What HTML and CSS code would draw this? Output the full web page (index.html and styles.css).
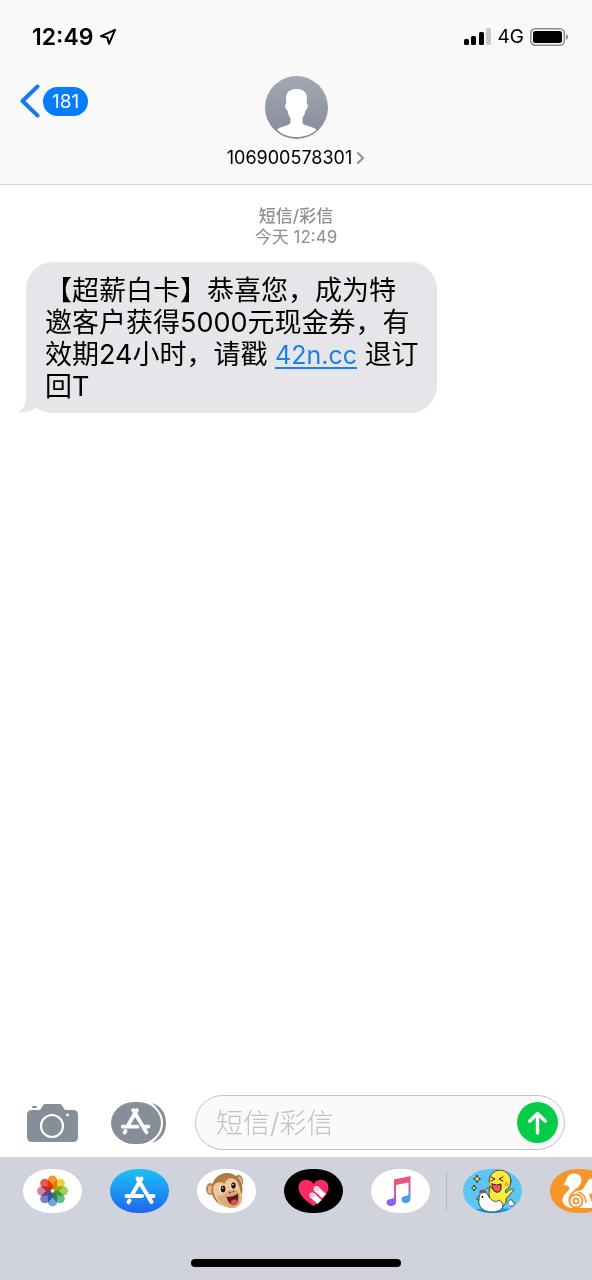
FILE: index.html
```html
<!DOCTYPE html>
<html lang="zh-CN">
<head>
<meta charset="utf-8">
<meta name="viewport" content="width=device-width, initial-scale=1">
<title>106900578301</title>
<link rel="stylesheet" href="styles.css">
</head>
<body>
<svg class="defs" width="0" height="0" aria-hidden="true">
  <defs>
    <linearGradient id="avatarFill" x1="0" y1="0" x2="0" y2="1"><stop offset="0" stop-color="#a2a8b4"/><stop offset="1" stop-color="#858a98"/></linearGradient>
    <linearGradient id="storeFill" x1="0" y1="0" x2="0" y2="1"><stop offset="0" stop-color="#1bc1f5"/><stop offset="1" stop-color="#1f67ef"/></linearGradient>
    <linearGradient id="musicFill" x1="0" y1="0" x2="0" y2="1"><stop offset="0" stop-color="#f5506e"/><stop offset=".35" stop-color="#e8568c"/><stop offset=".75" stop-color="#9a62e6"/><stop offset="1" stop-color="#7b62ee"/></linearGradient>
    <linearGradient id="musicFillRight" x1="0" y1="0" x2="0" y2="1"><stop offset="0" stop-color="#f5506e"/><stop offset=".4" stop-color="#c85fae"/><stop offset=".8" stop-color="#4a9df0"/><stop offset="1" stop-color="#35a5f2"/></linearGradient>
    <radialGradient id="furFill"><stop offset="0" stop-color="#cf9a5f"/><stop offset="1" stop-color="#a8743f"/></radialGradient>
    <g id="storeGlyph" fill="none" stroke="#fff" stroke-width="4" stroke-linecap="round">
      <path d="M31.500 9.500L22.500 25M27.500 9.500L41.500 33M16.500 27H32M39 27H43.500M19.500 31.500L18.500 33.300"/>
    </g>
  </defs>
</svg>

<header class="top">
  <div class="status">
    <div class="status-time">
      <span>12:49</span>
      <svg width="18" height="18" viewBox="0 0 18 18" aria-hidden="true"><path d="M16 1.800L2 8.200L8.300 9.400L10 15.800Z" fill="none" stroke="#000" stroke-width="2" stroke-linejoin="round"/></svg>
    </div>
    <div class="status-signal">
      <svg width="28" height="18" viewBox="0 0 28 18" aria-hidden="true"><rect x="0" y="11" width="5" height="6" rx="1.500"/><rect x="7" y="8" width="5" height="9" rx="1.500"/><rect x="15" y="4" width="5" height="13" rx="1.500"/><rect x="22" y="0" width="5" height="17" rx="1.500" fill="#c9c9c9"/></svg>
      <span>4G</span>
      <svg width="38" height="18" viewBox="0 0 38 18" aria-hidden="true"><rect x=".8" y=".8" width="33.500" height="16.400" rx="4.500" fill="none" stroke="#8c8c8c" stroke-width="1.500"/><rect x="3" y="3" width="29" height="12" rx="2.500"/><path d="M36 6Q38 6.500 38 9T36 12Z" fill="#8c8c8c"/></svg>
    </div>
  </div>
  <nav class="nav">
    <button class="back" type="button" aria-label="返回,181 条未读">
      <svg width="20" height="34" viewBox="0 0 20 34" aria-hidden="true"><path d="M17.500 2.500L2.500 17L17.500 31.500" fill="none" stroke="#147aef" stroke-width="4" stroke-linecap="round" stroke-linejoin="round"/></svg>
      <span class="badge">181</span>
    </button>
    <button class="contact" type="button">
      <svg width="63" height="63" viewBox="0 0 63 63" aria-hidden="true"><circle cx="31.500" cy="31.500" r="31.500" fill="url(#avatarFill)"/><path d="M31.500 13C37 13 42 15.500 42 22L41.700 28C43.500 28 43.200 33 40.500 34.500C40 38 38.500 40 37.500 42V46.500C38 50 46 49.500 51.500 53.500C46 59 39 61 31.500 61S17 59 12 53.500C17 49.500 25 50 25.500 46.500V42C24 40 23 38 22.500 34.500C19.800 33 19.500 28 21.300 28L21 22C21 15.500 26 13 31.500 13Z" fill="#fff"/></svg>
      <span class="number">106900578301
        <svg width="9" height="14" viewBox="0 0 9 14" aria-hidden="true"><path d="M2 2L7 7L2 12" fill="none" stroke="#8e8e93" stroke-width="2" stroke-linecap="round"/></svg>
      </span>
    </button>
  </nav>
</header>

<main class="thread">
  <p class="stamp"><strong>短信/彩信</strong><span>今天 12:49</span></p>
  <div class="bubble">
    <svg class="tail" width="30" height="32" viewBox="0 0 30 32" aria-hidden="true"><path d="M8 0V14C8 22 6 28 0 31Q10 33 19 26L30 22V0Z" fill="#e5e5ea"/></svg>
    <p class="message">【超薪白卡】恭喜您，成为特邀客户获得5000元现金券，有效期24小时，请戳 <a href="#">42n.cc</a> 退订回T</p>
  </div>
</main>

<form class="compose">
  <button class="tool" type="button" aria-label="相机">
    <svg width="52" height="40" viewBox="0 0 52 40" aria-hidden="true"><g fill="#868e99"><rect x="5" y="3" width="5" height="2" rx="1"/><path d="M5 7H12C15 7 15 1 18 1H33C36 1 36 7 39 7H46Q51 7 51 12V34Q51 39 46 39H5Q0 39 0 34V12Q0 7 5 7Z"/></g><circle cx="25" cy="23" r="11" fill="none" stroke="#fff" stroke-width="2.200"/><circle cx="40.500" cy="12" r="1.400" fill="#fff"/></svg>
  </button>
  <button class="tool" type="button" aria-label="App">
    <svg width="56" height="42" viewBox="0 0 56 42" aria-hidden="true"><path d="M41 1C50 4 55 11 55 21S50 38 41 41C47 36 50 30 50 21S47 6 41 1Z" fill="#868e99"/><rect x="-2" y="-1.500" width="54" height="45" rx="25" ry="22" fill="#fff"/><rect width="50" height="42" rx="23" ry="21" fill="#868e99"/><use href="#storeGlyph" transform="translate(-4 -1) scale(.95)"/></svg>
  </button>
  <div class="field">
    <input type="text" placeholder="短信/彩信" aria-label="短信/彩信">
    <button class="send" type="button" aria-label="发送">
      <svg width="41" height="41" viewBox="0 0 41 41" aria-hidden="true"><path d="M20.500 31V12M12.800 19L20.500 11.500L28.200 19" fill="none" stroke="#fff" stroke-width="3.400" stroke-linecap="round" stroke-linejoin="round"/></svg>
    </button>
  </div>
</form>

<footer class="dock">
  <div class="apps">
    <div class="group">
      <button class="app app-light" type="button" aria-label="照片">
        <svg viewBox="0 0 59 44" aria-hidden="true"><g class="petals" transform="translate(29.500 22)"><rect x="-4.700" y="-15.500" width="9.400" height="14" rx="4.700" fill="#f6972e"/><rect x="-4.700" y="-15.500" width="9.400" height="14" rx="4.700" fill="#e6d335" transform="rotate(45)"/><rect x="-4.700" y="-15.500" width="9.400" height="14" rx="4.700" fill="#a4cf55" transform="rotate(90)"/><rect x="-4.700" y="-15.500" width="9.400" height="14" rx="4.700" fill="#63bd87" transform="rotate(135)"/><rect x="-4.700" y="-15.500" width="9.400" height="14" rx="4.700" fill="#69a9d8" transform="rotate(180)"/><rect x="-4.700" y="-15.500" width="9.400" height="14" rx="4.700" fill="#7786c1" transform="rotate(225)"/><rect x="-4.700" y="-15.500" width="9.400" height="14" rx="4.700" fill="#cf86a8" transform="rotate(270)"/><rect x="-4.700" y="-15.500" width="9.400" height="14" rx="4.700" fill="#e95a4b" transform="rotate(315)"/></g></svg>
      </button>
      <button class="app" type="button" aria-label="App Store">
        <svg viewBox="0 0 59 44" aria-hidden="true"><rect width="59" height="44" fill="url(#storeFill)"/><use href="#storeGlyph"/></svg>
      </button>
      <button class="app app-light" type="button" aria-label="拟我表情">
        <svg viewBox="0 0 59 44" aria-hidden="true"><ellipse cx="13.500" cy="20" rx="4.500" ry="6" fill="#b98250"/><ellipse cx="13.500" cy="20.500" rx="2.700" ry="4" fill="#eeb596"/><ellipse cx="42.500" cy="11" rx="3.500" ry="5.500" fill="#b98250" transform="rotate(-20 42.500 11)"/><ellipse cx="43" cy="11.500" rx="1.800" ry="3.600" fill="#eeb596" transform="rotate(-20 43 11.500)"/><ellipse cx="30" cy="20.500" rx="15.500" ry="16.500" fill="url(#furFill)"/><path d="M17 25C13 14 22 11 28 15C29 8 38 7 41 14C43 18 43 22 45 27C47 34 42 39 35 39C26 39 20 34 17 25Z" fill="#efc797"/><path d="M20 27C23 26 26 28 28 24C32 20 39 19 42 23C45 28 45 38 36 39C28 39 22 34 20 27Z" fill="#dcaa75"/><ellipse cx="25.500" cy="20" rx="3.300" ry="4" fill="#fff"/><ellipse cx="36.500" cy="16.500" rx="3" ry="3.800" fill="#fff"/><ellipse cx="26" cy="20" rx="2.500" ry="3.400" fill="#22140f"/><ellipse cx="36.500" cy="16.500" rx="2.300" ry="3.200" fill="#22140f"/><circle cx="25.500" cy="19" r=".8" fill="#fff"/><circle cx="36" cy="15.500" r=".8" fill="#fff"/><path d="M32 23L34 24M36 22L37 23" stroke="#6e3d20" stroke-width="1.300"/><path d="M29.500 28Q36 28 41 24.500Q42.500 35 37 36Q31.500 36 29.500 28Z" fill="#651820"/><ellipse cx="37" cy="33" rx="3.300" ry="2.300" fill="#d9525c" transform="rotate(-20 37 33)"/></svg>
      </button>
      <button class="app app-dark" type="button" aria-label="Digital Touch">
        <svg viewBox="0 0 59 44" aria-hidden="true"><path d="M29.500 37C23 33 14.500 26 14.500 18.500C14.500 10 25 8 29.500 15C34 8 44.500 10 44.500 18.500C44.500 26 36 33 29.500 37Z" fill="#fb2b66"/><g fill="none" stroke="#fff" stroke-width="5.800"><path d="M32.500 20L40 27M28.300 26.300L35.500 33"/><path d="M32.500 20H32.510M28.300 26.300H28.310" stroke-linecap="round"/></g><g fill="none" stroke="#f88fae" stroke-width=".9"><circle cx="32.600" cy="20.100" r="1.600"/><circle cx="28.400" cy="26.400" r="1.600"/></g></svg>
      </button>
      <button class="app app-light" type="button" aria-label="音乐">
        <svg viewBox="0 0 59 44" aria-hidden="true"><path d="M23 10.500L31 8.800V14.800L25 16V33C25 35.800 22.500 37 20 37C17 37 15.500 35.500 15.500 33.500C15.500 30.500 18.500 30 21 29.700Q23 29.400 23 27.500Z" fill="url(#musicFill)"/><path d="M30.500 8.900L39.500 7V29.500C39.500 32.500 37 34 34.500 34C32 34 30.500 32.500 30.500 30.500C30.500 27.500 33.500 27 36 26.700Q37.500 26.400 37.500 25V13.500L30.500 14.900Z" fill="url(#musicFillRight)"/></svg>
      </button>
    </div>
    <span class="divider"></span>
    <div class="group">
      <button class="app app-sky" type="button" aria-label="表情贴纸">
        <svg viewBox="0 0 59 44" aria-hidden="true"><ellipse cx="30" cy="44" rx="28" ry="5" fill="#179be6"/><g stroke="#222" stroke-linecap="round" stroke-linejoin="round"><path d="M45 34C45 30 50 30 50 33C53 34 51 38 48 37" fill="#fff" stroke-width=".8"/><path d="M27 17C25 25 26 35 34 38C40 40 44 34 43 30L51 21C50 18 46 21 43 24L42 21Z" fill="#fde93b" stroke-width=".8"/><circle cx="37" cy="12" r="11" fill="#fde93b" stroke-width=".8"/><path d="M28 20L42 19V27H29Z" fill="#fde93b" stroke="none"/><path d="M16 27C18 22 24 22 26 28C29 32 33 34 36 31C44 36 39 43 29 43C19 43 14 37 16 27Z" fill="#fff" stroke-width=".8"/><path d="M17 24Q16 21 19 22Q20 19 23 23" fill="#ee3d48" stroke-width=".6"/><path d="M15.500 28L13 30L16 31Z" fill="#ffb52c" stroke-width=".6"/><path d="M28 8L32 10L28 12M40 8L36 10L40 12" fill="none" stroke-width="1"/><path d="M29 15Q34 17 38 15V20Q37 24 33 23Q29 22 29 15" fill="#f5515f" stroke-width="1"/><path d="M23 20Q25 17 27 21" fill="#fde93b" stroke-width=".8"/></g><circle cx="19.500" cy="28" r=".9"/><circle cx="26.800" cy="15" r="1.800" fill="#ffa044"/><circle cx="43.500" cy="15" r="2" fill="#ffa044"/><path d="M14 6L15.200 9L17.500 10L15.200 11L14 14L12.800 11L10.500 10L12.800 9ZM11 16L11.800 18L13.500 19L11.800 20L11 22L10.200 20L8.500 19L10.200 18Z" fill="#fff04b" stroke="#222" stroke-width=".8"/></svg>
      </button>
      <button class="app app-orange" type="button" aria-label="UC">
        <svg viewBox="0 0 59 44" aria-hidden="true"><path d="M21 39C11 37 10 29 17 23C22 19 19 16 13 16C17 13 16 5 23 4.500C33 4 34 14 27 19C21 23 17 28 19 34Z" fill="#fff"/><path d="M20 39C17 29 23 21 32 21C35 18 37 11 41 9L43 14C49 15 51 21 45 24L39 25L44 39Z" fill="#fff"/><circle cx="26" cy="32" r="6.500" fill="#fff" stroke="#f7942a" stroke-width="1.800"/><circle cx="26" cy="32" r="2.600" fill="none" stroke="#f7942a" stroke-width="1.800"/><path d="M28 23Q36 25 36 34" fill="none" stroke="#f7942a" stroke-width="1.500"/></svg>
      </button>
    </div>
  </div>
  <div class="home"></div>
</footer>
</body>
</html>
```
FILE: styles.css
```css
* {
  box-sizing: border-box;
}

body {
  margin: 0;
  min-height: 100vh;
  display: flex;
  flex-direction: column;
  background: #fff;
  color: #000;
  font-family: Inter, "Noto Sans CJK SC", sans-serif;
  overflow-x: hidden;
}

button {
  border: 0;
  padding: 0;
  background: none;
  font: inherit;
  color: inherit;
}

svg {
  display: block;
}

p {
  margin: 0;
}

.defs {
  position: absolute;
}

.top {
  background: #f9f9f9;
  border-bottom: 1px solid #d2d2d4;
  padding-bottom: 15px;
}

.status {
  display: flex;
  justify-content: space-between;
  align-items: center;
  padding: 22px 24px 0 32px;
}

.status-time,
.status-signal {
  display: flex;
  align-items: center;
  gap: 6px;
}

.status-time {
  font-size: 23px;
  line-height: 30px;
  font-weight: 600;
}

.status-signal {
  font-size: 19px;
  line-height: 30px;
}

.nav {
  display: grid;
  grid-template-columns: 1fr auto 1fr;
  align-items: start;
  padding: 24px 20px 0;
}

.back {
  display: flex;
  align-items: center;
  gap: 3px;
  justify-self: start;
  margin-top: 8px;
}

.badge {
  padding: 0 9px;
  border-radius: 15px;
  background: #087cff;
  color: #fff;
  font-size: 19px;
  line-height: 29px;
}

.contact {
  display: flex;
  flex-direction: column;
  align-items: center;
  gap: 8px;
}

.number {
  display: flex;
  align-items: center;
  gap: 4px;
  font-size: 18px;
  line-height: 22px;
}

.thread {
  flex: 1;
  padding: 21px 26px;
}

.stamp {
  display: flex;
  flex-direction: column;
  align-items: center;
  color: #8e8e93;
  font-size: 17px;
  line-height: 21px;
}

.stamp strong {
  font-weight: 500;
}

.bubble {
  position: relative;
  width: fit-content;
  max-width: 411px;
  margin-top: 14px;
  padding: 13px 15px 10px 19px;
  border-radius: 27px;
  background: #e5e5ea;
}

.message {
  position: relative;
  font-size: 27px;
  line-height: 32px;
}

.message a {
  color: #1b7fee;
  font-size: 25px;
  line-height: 1;
  text-underline-offset: 3px;
}

.tail {
  position: absolute;
  left: -8px;
  bottom: 0;
}

.compose {
  display: flex;
  align-items: center;
  padding: 0 27px 7px;
}

.tool {
  margin-right: 32px;
}

.tool + .tool {
  margin-right: 28px;
}

.field {
  flex: 1;
  display: flex;
  align-items: center;
  min-width: 0;
  height: 55px;
  padding: 0 6px 0 20px;
  border: 1px solid #c3c1c8;
  border-radius: 28px;
  background: #fafafa;
}

.field input {
  flex: 1;
  min-width: 0;
  padding: 2px 0 0;
  border: 0;
  outline: 0;
  background: none;
  font: inherit;
  font-size: 27px;
  line-height: 40px;
}

.field input::placeholder {
  color: #c0c0c6;
  font-weight: 300;
  opacity: 1;
}

.send {
  border-radius: 50%;
  background: #05cd48;
}

.dock {
  padding: 12px 0 13px;
  background: #d0d3db;
}

.apps {
  display: flex;
  align-items: center;
  padding-left: 23px;
  overflow: hidden;
}

.group {
  display: flex;
  flex-shrink: 0;
  gap: 28px;
}

.app {
  width: 59px;
  height: 44px;
  border-radius: 27px / 22px;
  overflow: hidden;
}

.app-light {
  background: #fff;
}

.app-dark {
  background: #000;
}

.app-sky {
  background: #5bc5f8;
}

.app-orange {
  background: #f7942a;
}

.petals rect {
  mix-blend-mode: multiply;
}

.divider {
  flex-shrink: 0;
  width: 1px;
  height: 40px;
  margin: 0 16px;
  background: #b4b7c0;
}

.home {
  width: 210px;
  height: 8px;
  margin: 46px auto 0;
  border-radius: 4px;
  background: #000;
}
```
